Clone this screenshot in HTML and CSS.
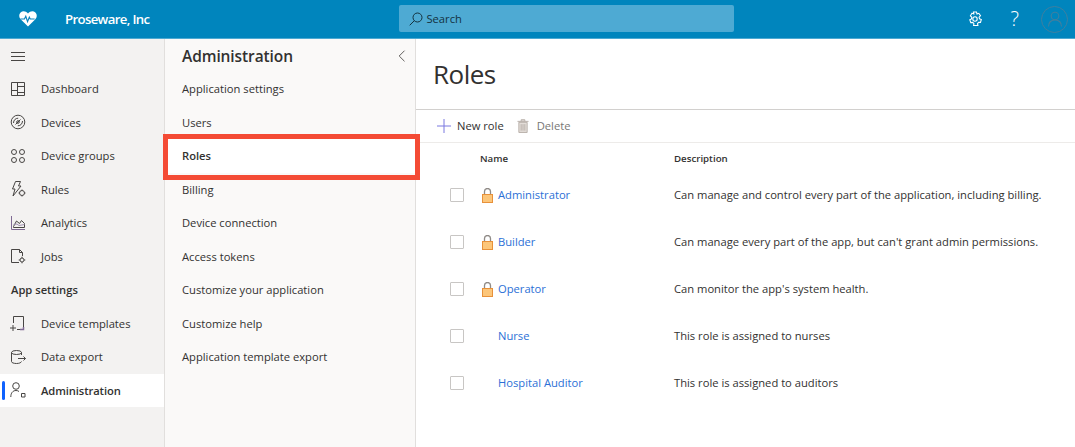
FILE: index.html
```html
<!DOCTYPE html>
<html lang="en">
<head>
    <meta charset="UTF-8">
    <title>Roles</title>
    <link rel="stylesheet" href="styles.css">
</head>
<body>

<header class="topbar">
    <div class="brand">
        <svg class="brand-icon" width="18" height="16" viewBox="0 0 20 18"><path d="M10 17.500 2 9.500C-.5 7-.3 3.500 1.700 1.700 4 -.3 7.500 0 10 2.800 12.500 0 16 -.3 18.300 1.700 20.300 3.500 20.500 7 18 9.500Z" fill="#fff"/><path d="M1.500 9h4.500l1.500-3 2 6 2-5 1 2h5" fill="none" stroke="#0a84bd" stroke-width="1.300"/></svg>
        <span class="brand-name">Proseware, Inc</span>
    </div>
    <div class="search">
        <svg width="14" height="14" viewBox="0 0 14 14" fill="none" stroke="#14323f" stroke-width="1"><circle cx="8.500" cy="5.500" r="4.500"/><path d="M5.300 8.700.7 13.300"/></svg>
        <span>Search</span>
    </div>
    <div class="top-actions">
        <svg class="gear" width="16" height="16" viewBox="0 0 16 16" fill="none" stroke="#fff" stroke-width="1.100"><path d="M6.500 1h3l.5 2 1.800-.7 1.700 2.500-1.400 1.400.4 1.600 1.800.7-.8 2.900-1.900-.1-1.100 1.300.4 1.900H6.600l.3-1.900-1.200-1.200-1.900.2-1-2.900 1.700-.8.300-1.700-1.400-1.400 1.600-2.500 1.800.7z"/><circle cx="8" cy="8" r="2.200"/></svg>
        <span class="help">?</span>
        <span class="avatar">
            <svg width="16" height="16" viewBox="0 0 16 16" fill="none" stroke="#3f7f9f" stroke-width="1.100"><circle cx="8" cy="5" r="3.800"/><path d="M1.500 15.500c0-4 2.500-6.500 6.500-6.500s6.500 2.500 6.500 6.500"/></svg>
        </span>
    </div>
</header>

<div class="layout">
    <nav class="sidenav">
        <div class="hamburger">
            <svg width="14" height="10" viewBox="0 0 14 10" stroke="#484644"><path d="M0 1.500h14M0 5.500h14M0 9.500h14"/></svg>
        </div>
        <a class="nav-item">
            <svg width="16" height="16" viewBox="0 0 16 16" fill="none" stroke="#484644"><path d="M1.500 1.500h13v13h-13zM7.500 1.500v13M1.500 9.500h6M7.500 5.500h7M7.500 11.500h7"/></svg>
            <span>Dashboard</span>
        </a>
        <a class="nav-item">
            <svg width="16" height="16" viewBox="0 0 16 16" fill="none" stroke="#484644"><circle cx="8" cy="8" r="6.800"/><path d="M3.500 9c0-2.800 2-4.800 4.700-4.800M12.500 7c0 2.800-2 4.800-4.700 4.800M5.500 10.500 10.500 5.500"/><circle cx="8" cy="8" r="1.300"/></svg>
            <span>Devices</span>
        </a>
        <a class="nav-item">
            <svg width="16" height="16" viewBox="0 0 16 16" fill="none" stroke="#484644"><circle cx="4" cy="4" r="2.500"/><circle cx="12" cy="4" r="2.500"/><circle cx="4" cy="12" r="2.500"/><circle cx="12" cy="12" r="2.500"/></svg>
            <span>Device groups</span>
        </a>
        <a class="nav-item">
            <svg width="16" height="16" viewBox="0 0 16 16" fill="none" stroke="#484644"><path d="M5.500.5h5l-2 4.500h2.500L3 15l2-7H2.500z"/><circle cx="12" cy="12" r="2.500"/><path d="M12 8.500v1M12 14.500v1M8.500 12h1M14.500 12h1"/></svg>
            <span>Rules</span>
        </a>
        <a class="nav-item">
            <svg width="16" height="16" viewBox="0 0 16 16" fill="none"><path d="M1.500 1v13.500H15" stroke="#7f6a94"/><path d="M3.500 11.500 6.500 6l3 2.500 2-3 3 3v4h-11z" stroke="#484644"/><path d="M3.500 9.500 7 9l2 1.500 5.500-1" stroke="#9d8fae"/></svg>
            <span>Analytics</span>
        </a>
        <a class="nav-item">
            <svg width="16" height="16" viewBox="0 0 16 16" fill="none" stroke="#484644"><path d="M9 14.500H1.500v-13h8l3 3V8M9.500 1.500v3h3"/><circle cx="12" cy="12" r="2"/><path d="M12 8.700v1.300M12 14v1.300M8.700 12H10M14 12h1.300"/></svg>
            <span>Jobs</span>
        </a>
        <div class="nav-heading">App settings</div>
        <a class="nav-item">
            <svg width="16" height="16" viewBox="0 0 16 16" fill="none" stroke="#484644"><path d="M3.500 8V1.500h10v13H7"/><path d="M0 13h6M3 10v6" /><path d="M10 14.500h3.500V12" stroke="#7f6a94" stroke-width="1.500"/></svg>
            <span>Device templates</span>
        </a>
        <a class="nav-item">
            <svg width="16" height="16" viewBox="0 0 16 16" fill="none" stroke="#484644"><ellipse cx="6.500" cy="3.500" rx="5" ry="2"/><path d="M1.500 3.500v9c0 1.200 2.200 2 5 2s4.500-.8 5-2M11.500 3.500V6M8 9.500h7.500M13.500 7.500l2 2-2 2"/></svg>
            <span>Data export</span>
        </a>
        <a class="nav-item active">
            <svg width="16" height="16" viewBox="0 0 16 16" fill="none" stroke="#484644"><circle cx="6" cy="4" r="3.300"/><path d="M.8 15c0-4 2-6.500 5.200-6.500 1.200 0 2.200.3 3 1"/><path d="M11.500 11.500h3.500v3.500h-3.500z"/></svg>
            <span>Administration</span>
        </a>
    </nav>

    <aside class="subnav">
        <div class="subnav-head">
            <h2>Administration</h2>
            <svg width="8" height="12" viewBox="0 0 8 12" fill="none" stroke="#605e5c"><path d="M6.500.7 1.200 6l5.300 5.300"/></svg>
        </div>
        <a class="sub-item">Application settings</a>
        <a class="sub-item">Users</a>
        <a class="sub-item selected">Roles</a>
        <a class="sub-item">Billing</a>
        <a class="sub-item">Device connection</a>
        <a class="sub-item">Access tokens</a>
        <a class="sub-item">Customize your application</a>
        <a class="sub-item">Customize help</a>
        <a class="sub-item">Application template export</a>
    </aside>

    <main class="content">
        <h1>Roles</h1>
        <div class="toolbar">
            <button class="tool">
                <svg width="14" height="14" viewBox="0 0 14 14" stroke="#7a78e0"><path d="M7 0v14M0 7h14"/></svg>
                New role
            </button>
            <button class="tool disabled">
                <svg width="12" height="14" viewBox="0 0 13 15" fill="#e3ddd8" stroke="#b5aca6"><path d="M2 3.500h9v11H2zM.5 2.500h12M4.500 2.500V.7h4v1.800M4.500 5.500v7M6.500 5.500v7M8.500 5.500v7"/></svg>
                Delete
            </button>
        </div>
        <div class="role-row role-head">
            <span class="col-check"></span>
            <span class="col-name">Name</span>
            <span class="col-desc">Description</span>
        </div>
        <div class="role-row">
            <span class="col-check"><i class="checkbox"></i></span>
            <span class="col-name"><svg class="lock" width="11" height="15" viewBox="0 0 11 15"><path d="M2.500 7V3.500a3 3 0 0 1 6 0V7" fill="none" stroke="#8f8a86" stroke-width="1.300"/><rect x=".5" y="6.500" width="10" height="8" fill="#fcc67a" stroke="#e8913a"/></svg><a>Administrator</a></span>
            <span class="col-desc">Can manage and control every part of the application, including billing.</span>
        </div>
        <div class="role-row">
            <span class="col-check"><i class="checkbox"></i></span>
            <span class="col-name"><svg class="lock" width="11" height="15" viewBox="0 0 11 15"><path d="M2.500 7V3.500a3 3 0 0 1 6 0V7" fill="none" stroke="#8f8a86" stroke-width="1.300"/><rect x=".5" y="6.500" width="10" height="8" fill="#fcc67a" stroke="#e8913a"/></svg><a>Builder</a></span>
            <span class="col-desc">Can manage every part of the app, but can't grant admin permissions.</span>
        </div>
        <div class="role-row">
            <span class="col-check"><i class="checkbox"></i></span>
            <span class="col-name"><svg class="lock" width="11" height="15" viewBox="0 0 11 15"><path d="M2.500 7V3.500a3 3 0 0 1 6 0V7" fill="none" stroke="#8f8a86" stroke-width="1.300"/><rect x=".5" y="6.500" width="10" height="8" fill="#fcc67a" stroke="#e8913a"/></svg><a>Operator</a></span>
            <span class="col-desc">Can monitor the app's system health.</span>
        </div>
        <div class="role-row">
            <span class="col-check"><i class="checkbox"></i></span>
            <span class="col-name"><span class="no-lock"></span><a>Nurse</a></span>
            <span class="col-desc">This role is assigned to nurses</span>
        </div>
        <div class="role-row">
            <span class="col-check"><i class="checkbox"></i></span>
            <span class="col-name"><span class="no-lock"></span><a>Hospital Auditor</a></span>
            <span class="col-desc">This role is assigned to auditors</span>
        </div>
    </main>
</div>

<div class="callout"></div>

</body>
</html>
```

FILE: styles.css
```css
* {
    box-sizing: border-box;
}

html, body {
    height: 100%;
}

body {
    margin: 0;
    font-family: "Open Sans", "Liberation Sans", sans-serif;
    font-size: 11.2px;
    color: #323130;
    overflow: hidden;
    display: flex;
    flex-direction: column;
}

.topbar {
    height: 39px;
    flex: none;
    display: flex;
    align-items: center;
    background-color: #0085bd;
    border-bottom: 1px solid #4da9d2;
    position: relative;
}

.brand {
    display: flex;
    align-items: center;
    padding-left: 19px;
}

.brand-name {
    margin-left: 28px;
    font-size: 13.2px;
    font-weight: 600;
    color: #fff;
    letter-spacing: -0.65px;
}

.search {
    margin-left: 250px;
    width: 335px;
    height: 27px;
    margin-bottom: 1px;
    display: flex;
    align-items: center;
    gap: 3px;
    padding-left: 10px;
    background-color: #4eaad3;
    border-radius: 2px;
    color: #14323f;
}

.top-actions {
    margin-left: auto;
    display: flex;
    align-items: center;
    padding-right: 7px;
}

.help {
    margin-left: 28px;
    font-size: 20px;
    font-weight: 300;
    color: #fff;
    line-height: 1;
}

.avatar {
    margin-left: 22px;
    width: 27px;
    height: 27px;
    border: 1px solid #3f7f9f;
    border-radius: 50%;
    display: flex;
    align-items: center;
    justify-content: center;
}

.layout {
    flex: 1;
    display: flex;
    min-height: 0;
}

.sidenav {
    width: 165px;
    flex: none;
    background-color: #f3f2f1;
    border-right: 1px solid #e1dfdd;
}

.hamburger {
    height: 33px;
    padding: 1px 0 0 11px;
    display: flex;
    align-items: center;
}

.nav-item {
    height: 33.5px;
    display: flex;
    align-items: center;
    padding-left: 10px;
    position: relative;
}

.nav-item span {
    margin-left: 15px;
}

.nav-item.active {
    background-color: #fff;
    font-weight: 600;
    letter-spacing: -0.1px;
}

.nav-item.active::before {
    content: "";
    position: absolute;
    left: 2px;
    top: 7px;
    bottom: 7px;
    width: 3px;
    border-radius: 2px;
    background-color: #0f62fe;
}

.nav-heading {
    height: 33.5px;
    line-height: 33.5px;
    padding-left: 11px;
    font-weight: 600;
}

.subnav {
    width: 251px;
    flex: none;
    background-color: #faf9f8;
    border-right: 1px solid #e1dfdd;
}

.subnav-head {
    height: 33px;
    display: flex;
    align-items: center;
    justify-content: space-between;
    padding: 0 9px 0 17px;
}

.subnav-head h2 {
    margin: 0;
    font-size: 15.5px;
    font-weight: 600;
    letter-spacing: -0.1px;
}

.sub-item {
    display: block;
    height: 33.5px;
    line-height: 33.5px;
    padding-left: 17px;
}

.sub-item.selected {
    background-color: #fff;
    font-weight: 600;
}

.content {
    flex: 1;
    min-width: 0;
    background-color: #fff;
}

.content h1 {
    margin: 0;
    height: 71px;
    line-height: 71px;
    padding-left: 17px;
    font-size: 26px;
    font-weight: 400;
    letter-spacing: -0.5px;
    border-bottom: 1px solid #d2d0ce;
}

.toolbar {
    height: 33px;
    display: flex;
    align-items: center;
    padding: 0 0 1px 21px;
    gap: 13px;
    border-bottom: 1px solid #edebe9;
}

.tool {
    display: flex;
    align-items: center;
    gap: 6px;
    padding: 0;
    border: none;
    background: none;
    font: inherit;
    color: #323130;
}

.tool.disabled {
    color: #797775;
    gap: 8px;
}

.role-row {
    height: 47px;
    display: flex;
    align-items: center;
}

.role-head {
    height: 28px;
    padding-top: 2px;
    font-size: 9.7px;
    font-weight: 600;
}

.col-check {
    width: 64px;
    padding-left: 34px;
    flex: none;
}

.col-name {
    width: 194px;
    flex: none;
    display: flex;
    align-items: center;
}

.col-desc {
    white-space: nowrap;
}

.checkbox {
    display: block;
    width: 14px;
    height: 14px;
    border: 1px solid #c8c6c4;
    border-radius: 1px;
}

.lock, .no-lock {
    width: 11px;
    flex: none;
    margin: 1px 5px 0 2px;
}

.col-name a {
    color: #2b6fd6;
}

.callout {
    position: absolute;
    left: 163px;
    top: 134px;
    width: 257px;
    height: 46px;
    border: 5px solid #f44b35;
}
```
